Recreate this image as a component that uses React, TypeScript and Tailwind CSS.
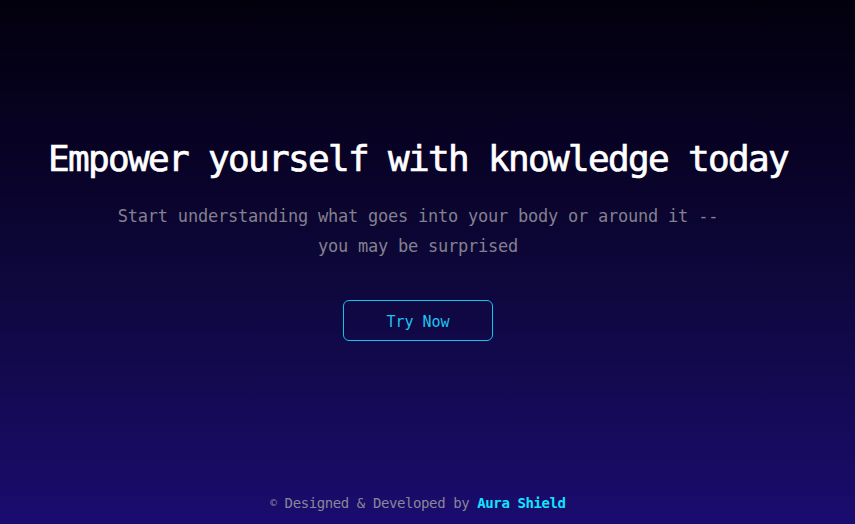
import React from "react";

export default function App() {
  return (
    <div
      className="flex h-[524px] w-full flex-col bg-gradient-to-b from-[#03000d] via-[#0d0739] to-[#1a0c6f] pr-[19px] text-white"
      style={{ fontFamily: '"DejaVu Sans Mono", "Liberation Mono", monospace' }}
    >
      <main className="flex flex-1 flex-col items-center pt-[137px]">
        <h1 className="text-[36px] leading-[43px] tracking-[-1.67px] text-white whitespace-nowrap [-webkit-text-stroke:0.7px_#ffffff]">
          Empower yourself with knowledge today
        </h1>
        <p className="mt-[21px] max-w-[620px] text-center text-[17px] leading-[30px] tracking-[-0.23px] text-[#84808e]">
          Start understanding what goes into your body or around it -- you may be surprised
        </p>
        <button className="mt-[39px] flex h-[41px] w-[150px] items-center justify-center rounded-[6px] border border-[#12c3ee] pt-[3px] text-[15px] text-[#1ac6f0]">
          Try Now
        </button>
      </main>
      <footer className="flex justify-center pb-[11px]">
        <p className="text-[14px] leading-[20px] tracking-[-0.4px] text-[#8a8699]">
          <span className="text-[11px] align-top">©</span> Designed &amp; Developed by{" "}
          <span className="font-semibold text-[#12e4ff]">Aura Shield</span>
        </p>
      </footer>
    </div>
  );
}
